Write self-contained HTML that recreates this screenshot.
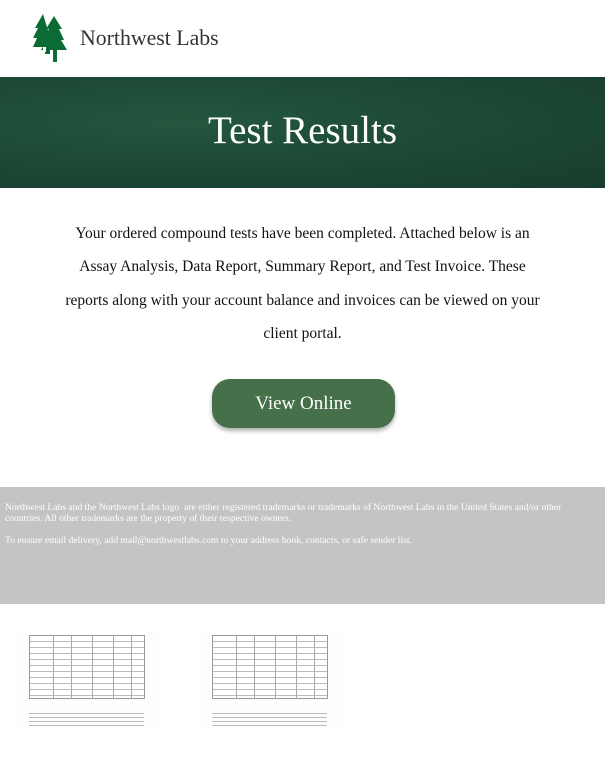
<!DOCTYPE html>
<html><head><meta charset="utf-8"><style>
body{margin:0;width:605px;height:776px;background:#fff;font-family:"Liberation Serif",serif;position:relative;overflow:hidden}
.logo{position:absolute;left:33px;top:14px}
.brand{position:absolute;left:80px;top:26px;font-size:21.8px;color:#333}
.banner{position:absolute;left:0;top:77px;width:605px;height:111px;background:radial-gradient(ellipse at 30% 40%,#24573f,#1b4633 60%,#173d2d);}
.banner h1{margin:0;font-weight:normal;color:#fff;font-size:39px;text-align:center;line-height:111px;position:relative;top:-2px}
.body{position:absolute;left:63px;width:479px;top:217px;text-align:center;font-size:15.5px;line-height:33.3px;color:#111}
.btn{position:absolute;left:212px;top:379px;width:183px;height:49px;border-radius:18px;background:#467049;color:#fff;font-size:19px;text-align:center;line-height:49px;box-shadow:0 3px 4px rgba(0,0,0,.3)}
.foot{position:absolute;left:0;top:487px;width:605px;height:117px;background:#c4c4c4;color:#fff;font-size:9.6px;line-height:11px;padding:15px 4px 0 5px;box-sizing:border-box}
.thumb{position:absolute;top:633px;width:143px;height:97px;background:#fdfdfd}
.tbl{position:absolute;left:12px;top:2px;width:116px;height:64px;border:1px solid #999;box-sizing:border-box;
background:repeating-linear-gradient(#fff 0 5px,#bbb 5px 6px),#fff}
.tbl i{position:absolute;top:0;bottom:0;width:1px;background:#aaa}
.ln{position:absolute;left:12px;width:115px;height:1px;background:#bbb}
</style></head><body>
<svg class="logo" width="34" height="48" viewBox="0 0 34 48"><polygon fill="#0b6b35" points="10,0 2,14 5,14 0,24 4,24 0,33 12,33 12,40 17,40 17,33 20,33" /><polygon fill="#0b6b35" points="21,2 13,15 16,15 10,26 14,26 8,36 20,36 20,48 24,48 24,36 34,36 28,26 31,26 26,15 29,15"/><rect x="10" y="33" width="3" height="5" fill="#fff"/></svg>
<div class="brand">Northwest Labs</div>
<div class="banner"><h1>Test Results</h1></div>
<div class="body">Your ordered compound tests have been completed. Attached below is an Assay Analysis, Data Report, Summary Report, and Test Invoice. These reports along with your account balance and invoices can be viewed on your client portal.</div>
<div class="btn">View Online</div>
<div class="foot">Northwest Labs and the Northwest Labs logo&nbsp; are either registered trademarks or trademarks of Northwest Labs in the United States and/or other countries. All other trademarks are the property of their respective owners.<br><br>To ensure email delivery, add mail@northwestlabs.com to your address book, contacts, or safe sender list.</div>
<div class="thumb" style="left:17px"><div class="tbl"><i style="left:23px"></i><i style="left:41px"></i><i style="left:62px"></i><i style="left:83px"></i><i style="left:101px"></i></div><div class="ln" style="top:80px"></div><div class="ln" style="top:84px"></div><div class="ln" style="top:88px"></div><div class="ln" style="top:92px"></div></div>
<div class="thumb" style="left:200px"><div class="tbl"><i style="left:23px"></i><i style="left:41px"></i><i style="left:62px"></i><i style="left:83px"></i><i style="left:101px"></i></div><div class="ln" style="top:80px"></div><div class="ln" style="top:84px"></div><div class="ln" style="top:88px"></div><div class="ln" style="top:92px"></div></div>
</body></html>
